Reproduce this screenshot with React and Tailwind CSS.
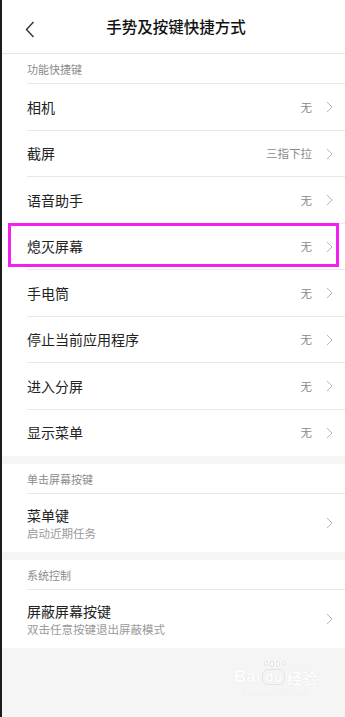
import React from "react";

const Chevron = () => (
  <svg width="7" height="12" viewBox="0 0 7 12" className="shrink-0">
    <polyline points="1,1 6,6 1,11" fill="none" stroke="#b8b8b8" strokeWidth="1" />
  </svg>
);

const Row = ({ label, value, last }) => (
  <div className="relative flex h-[46.5px] items-center pl-[25px] pr-[12px]">
    <span className="flex-1 text-[14px] text-[#222]">{label}</span>
    <span className="mr-[14px] text-[11.5px] text-[#8a8a8a]">{value}</span>
    <Chevron />
    {!last && <div className="absolute bottom-0 left-[25px] right-0 h-px bg-[#e8e8e8]" />}
  </div>
);

const SectionHeader = ({ title }) => (
  <div className="relative flex h-[30px] items-center pl-[25px]">
    <span className="text-[11px] text-[#8c8c8c]">{title}</span>
    <div className="absolute bottom-0 left-[25px] right-0 h-px bg-[#e8e8e8]" />
  </div>
);

const SubRow = ({ title, sub }) => (
  <div className="flex h-[58px] items-center pl-[25px] pr-[12px]">
    <div className="flex flex-1 flex-col">
      <span className="text-[14px] leading-[19px] text-[#222]">{title}</span>
      <span className="text-[11.5px] leading-[16px] text-[#9a9a9a]">{sub}</span>
    </div>
    <Chevron />
  </div>
);

export default function App() {
  const rows = [
    ["相机", "无"],
    ["截屏", "三指下拉"],
    ["语音助手", "无"],
    ["熄灭屏幕", "无"],
    ["手电筒", "无"],
    ["停止当前应用程序", "无"],
    ["进入分屏", "无"],
    ["显示菜单", "无"],
  ];
  return (
    <div
      className="relative flex h-[717px] w-[345px] overflow-hidden bg-[#f5f5f5]"
      style={{ fontFamily: '"Noto Sans CJK SC", "Noto Sans", sans-serif' }}
    >
      <div className="w-[2px] shrink-0 bg-[#1c1c1c]" />
      <div className="flex flex-1 flex-col">
        <div className="relative flex h-[54px] items-center justify-center bg-white border-b border-[#e6e6e6]">
          <svg width="10" height="17" viewBox="0 0 10 17" className="absolute left-[23px] top-[21px]">
            <polyline points="8.5,1 1.5,8.5 8.5,16" fill="none" stroke="#333" strokeWidth="1.4" />
          </svg>
          <span className="ml-[5px] text-[15.5px] font-medium text-[#111]">手势及按键快捷方式</span>
        </div>
        <div className="bg-white">
          <SectionHeader title="功能快捷键" />
          {rows.map(([l, v], i) => (
            <Row key={l} label={l} value={v} last={i === rows.length - 1} />
          ))}
        </div>
        <div className="mt-[8px] bg-white">
          <SectionHeader title="单击屏幕按键" />
          <SubRow title="菜单键" sub="启动近期任务" />
        </div>
        <div className="mt-[8px] bg-white">
          <SectionHeader title="系统控制" />
          <SubRow title="屏蔽屏幕按键" sub="双击任意按键退出屏蔽模式" />
        </div>
        <div className="flex flex-1 justify-end pr-[28px] pt-[20px]">
          <div className="flex flex-col items-center text-white opacity-90" style={{ textShadow: "0 0 1px #d8d8d8" }}>
            <div className="flex items-end">
              <span className="text-[17px] font-bold leading-none" style={{ fontFamily: "Arial, sans-serif" }}>Bai</span>
              <span className="relative ml-[2px] rounded-[6px] border border-[#e2e2e2] px-[2px] text-[13px] font-bold leading-[14px]">du
                <span className="absolute left-[1px] top-[-9px] flex gap-[2px]">
                  <span className="h-[5px] w-[4px] rounded-full bg-white border border-[#e2e2e2]" />
                  <span className="h-[6px] w-[4px] rounded-full bg-white border border-[#e2e2e2]" />
                  <span className="h-[6px] w-[4px] rounded-full bg-white border border-[#e2e2e2]" />
                  <span className="h-[5px] w-[4px] rounded-full bg-white border border-[#e2e2e2]" />
                </span>
              </span>
              <span className="ml-[2px] text-[15px] font-bold leading-none">经验</span>
            </div>
            <span className="mt-[3px] text-[9px] leading-none" style={{ fontFamily: "Georgia, serif" }}>jingyan.baidu.com</span>
          </div>
        </div>
      </div>
      <div className="pointer-events-none absolute left-[8px] top-[223px] h-[44px] w-[331px] border-[3px] border-[#f51ff0]" />
    </div>
  );
}
